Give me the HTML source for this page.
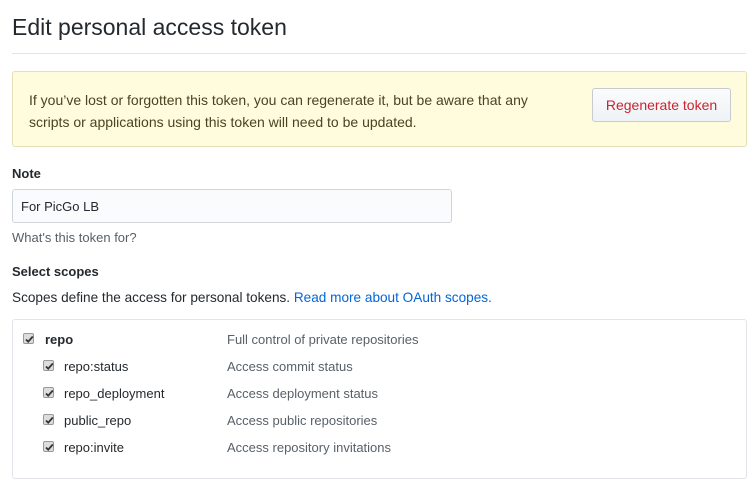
<!DOCTYPE html>
<html><head><meta charset="utf-8"><style>
*{margin:0;padding:0;box-sizing:border-box}
body{width:754px;height:466px;overflow:hidden;background:#fff;font-family:"Liberation Sans",sans-serif;color:#24292e;position:relative}
.a{position:absolute;white-space:nowrap}
h1{position:absolute;left:12px;top:14px;font-size:23px;font-weight:normal;color:#24292e}
.hr{position:absolute;left:12px;top:53px;width:734px;height:1px;background:#e1e4e8}
.flash{position:absolute;left:12px;top:71px;width:735px;height:76px;background:#fffbdd;border:1px solid #e3dfb8;border-radius:3px}
.ft{position:absolute;left:16px;top:17px;font-size:14px;line-height:22px;color:#494521}
.btn{position:absolute;left:579px;top:16px;width:139px;height:34px;border:1px solid #c8ccd1;border-radius:3px;background:linear-gradient(#fafbfc,#eff3f6);color:#cb2431;font-size:14px;text-align:center;line-height:32px}
.b{font-weight:bold;font-size:13px}
.inp{position:absolute;left:12px;top:189px;width:440px;height:34px;border:1px solid #d1d5da;border-radius:3px;background:#fafbfc;font-size:13px;padding:9px 8px;line-height:15px}
.box{position:absolute;left:12px;top:319px;width:735px;height:160px;border:1px solid #e1e4e8;border-radius:3px}
.cb{position:absolute;width:11px;height:11px;border:1px solid #999;border-radius:2px;background:#ddd}
.cb svg{position:absolute;left:0;top:0}
.l{font-size:13px}
.d{font-size:13px;color:#586069}
</style></head><body>
<h1>Edit personal access token</h1>
<div class="hr"></div>
<div class="flash"><div class="ft">If you’ve lost or forgotten this token, you can regenerate it, but be aware that any<br>scripts or applications using this token will need to be updated.</div><div class="btn">Regenerate token</div></div>
<div class="a b" style="left:12px;top:166px">Note</div>
<div class="inp">For PicGo LB</div>
<div class="a" style="left:12px;top:230px;font-size:13px;color:#586069">What's this token for?</div>
<div class="a b" style="left:12px;top:264px">Select scopes</div>
<div class="a" style="left:12px;top:290px;font-size:13.6px">Scopes define the access for personal tokens. <span style="color:#0366d6">Read more about OAuth scopes.</span></div>
<div class="box"></div>

<div class="cb" style="left:23px;top:333px"><svg width="11" height="11" viewBox="0 0 11 11"><path d="M2 5.5l2.2 2.2L8.8 2.5" stroke="#333" stroke-width="1.8" fill="none"/></svg></div>
<div class="a b" style="left:45px;top:332px">repo</div>
<div class="a d" style="left:227px;top:332px">Full control of private repositories</div>

<div class="cb" style="left:43px;top:360px"><svg width="11" height="11" viewBox="0 0 11 11"><path d="M2 5.5l2.2 2.2L8.8 2.5" stroke="#333" stroke-width="1.8" fill="none"/></svg></div>
<div class="a l" style="left:64px;top:359px">repo:status</div>
<div class="a d" style="left:227px;top:359px">Access commit status</div>

<div class="cb" style="left:43px;top:387px"><svg width="11" height="11" viewBox="0 0 11 11"><path d="M2 5.5l2.2 2.2L8.8 2.5" stroke="#333" stroke-width="1.8" fill="none"/></svg></div>
<div class="a l" style="left:64px;top:386px">repo_deployment</div>
<div class="a d" style="left:227px;top:386px">Access deployment status</div>

<div class="cb" style="left:43px;top:414px"><svg width="11" height="11" viewBox="0 0 11 11"><path d="M2 5.5l2.2 2.2L8.8 2.5" stroke="#333" stroke-width="1.8" fill="none"/></svg></div>
<div class="a l" style="left:64px;top:413px">public_repo</div>
<div class="a d" style="left:227px;top:413px">Access public repositories</div>

<div class="cb" style="left:43px;top:441px"><svg width="11" height="11" viewBox="0 0 11 11"><path d="M2 5.5l2.2 2.2L8.8 2.5" stroke="#333" stroke-width="1.8" fill="none"/></svg></div>
<div class="a l" style="left:64px;top:440px">repo:invite</div>
<div class="a d" style="left:227px;top:440px">Access repository invitations</div>
</body></html>
